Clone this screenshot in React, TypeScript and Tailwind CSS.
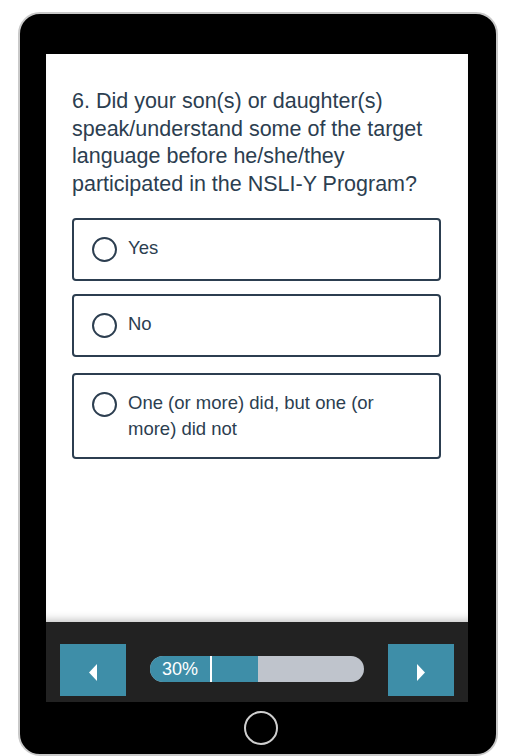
import React from "react";

const options = [
  { label: "Yes", gap: "mb-[13px]" },
  { label: "No", gap: "mb-[16px]" },
  { label: "One (or more) did, but one (or more) did not", gap: "" },
];

export default function App() {
  return (
    <div className="min-h-[756px] bg-white pt-[12px] pl-[18px] font-['Liberation_Sans',Arial,sans-serif] overflow-hidden">
      {/* Tablet frame */}
      <div className="w-[480px] h-[744px] rounded-[22px] border-2 border-[#c9c9c9] bg-black pt-[40px] pl-[26px] flex flex-col">
        {/* Screen */}
        <div className="w-[422px] h-[648px] flex flex-col">
          <div className="flex-1 bg-white px-[26px] pt-[34px] shadow-[inset_0_-8px_8px_-6px_rgba(0,0,0,0.25)]">
            <h2 className="text-[21.5px] leading-[27.5px] text-[#2c3e50] mb-[20px]">
              6. Did your son(s) or daughter(s) speak/understand some of the target language before he/she/they participated in the NSLI-Y Program?
            </h2>
            <div className="flex flex-col w-[369px]">
              {options.map((opt) => (
                <label
                  key={opt.label}
                  className={`flex items-start gap-[11px] border-2 border-[#2c3e50] rounded-[4px] px-[18px] py-[15px] cursor-pointer ${opt.gap}`}
                >
                  <span className="w-[25px] h-[25px] shrink-0 rounded-full border-2 border-[#2c3e50] my-[2px]" />
                  <span className="text-[18.5px] leading-[26px] text-[#2c3e50] pr-4">{opt.label}</span>
                </label>
              ))}
            </div>
          </div>
          {/* Navigation bar */}
          <div className="h-[80px] bg-[#222222] flex items-start gap-[24px] px-[14px] pt-[22px]">
            <button className="w-[66px] h-[52px] bg-[#3e8ea8] flex items-center justify-center">
              <svg width="10" height="17" viewBox="0 0 10 17" className="mt-[4px]">
                <path d="M9 0 L1 8.5 L9 17 Z" fill="white" />
              </svg>
            </button>
            <div className="relative w-[214px] h-[26px] mt-[12px] rounded-full bg-[#bfc4cc] overflow-hidden">
              <div className="h-full w-[108px] bg-[#3e8ea8]" />
              <span className="absolute left-[12px] top-0 h-full flex items-center text-white text-[18px]">30%</span>
              <span className="absolute left-[60px] top-0 h-full w-[2px] bg-white" />
            </div>
            <button className="w-[66px] h-[52px] bg-[#3e8ea8] flex items-center justify-center">
              <svg width="10" height="17" viewBox="0 0 10 17" className="mt-[4px]">
                <path d="M1 0 L9 8.5 L1 17 Z" fill="white" />
              </svg>
            </button>
          </div>
        </div>
        {/* Home button */}
        <div className="w-[422px] flex justify-center pt-[9px]">
          <div className="w-[34px] h-[34px] rounded-full border-2 border-[#cfcfcf] ml-[7px]" />
        </div>
      </div>
    </div>
  );
}
